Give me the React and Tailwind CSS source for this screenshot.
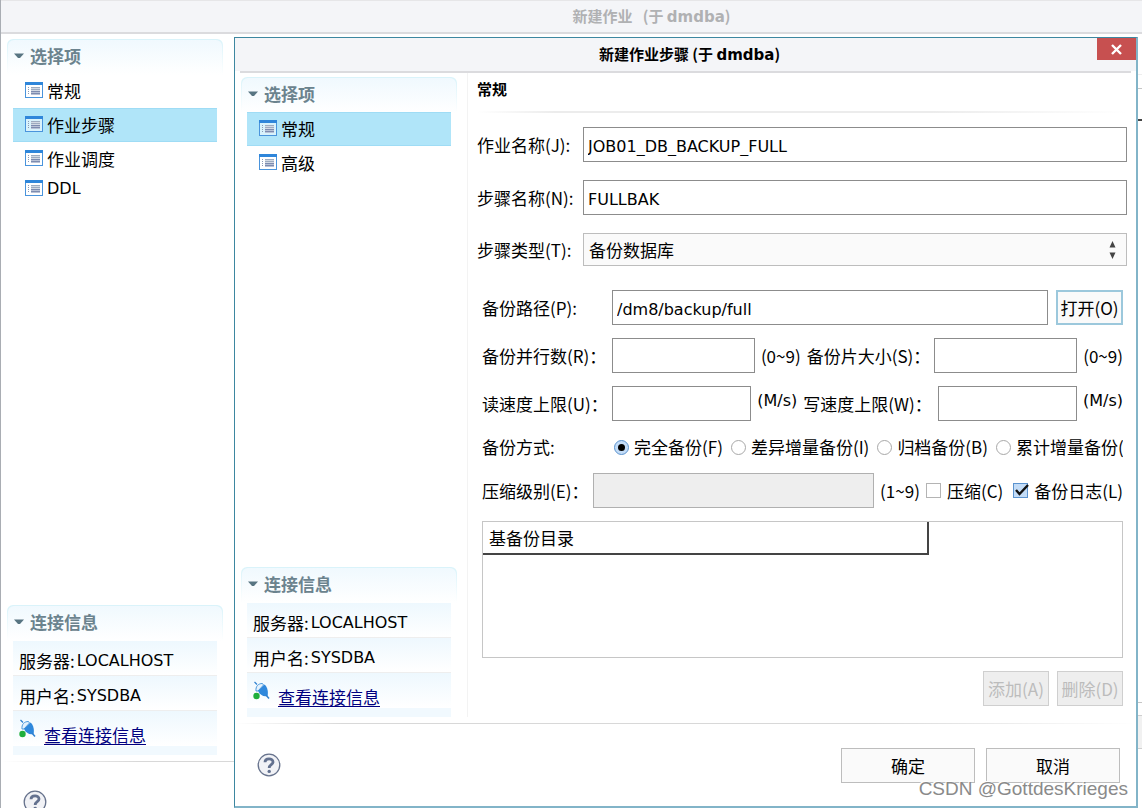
import React, { useId, useState } from "react";
import clsx from "clsx";

const OUTER_ITEMS = ["常规", "作业步骤", "作业调度", "DDL"];
const STEP_ITEMS = ["常规", "高级"];
const MODES = ["完全备份(F)", "差异增量备份(I)", "归档备份(B)", "累计增量备份("];

const LATIN = "font-['DejaVu_Sans','Noto_Sans_CJK_SC',sans-serif] text-[16px]";

function ListIcon() {
  return (
    <svg width="18" height="16" viewBox="0 0 18 16" className="mb-0.5 flex-shrink-0" aria-hidden="true">
      <rect x="0.5" y="0.5" width="17" height="15" fill="#fff" fillOpacity="0.5" stroke="#4a94dc" />
      <rect width="18" height="3" fill="#2f86da" />
      {[5, 7, 9, 11].map((y) => (
        <g key={y}>
          <rect x="3" y={y} width="1" height="1" fill="#8b9ab5" />
          <rect x="6" y={y} width="9" height="2" fill={y > 8 ? "#b9c2d6" : "#d3dae4"} />
          <rect x="6" y={y} width="9" height="1" fill={y > 8 ? "#7d8cb0" : "#9dabc0"} />
        </g>
      ))}
    </svg>
  );
}

function PlugIcon() {
  return (
    <svg width="17" height="19" viewBox="0 0 17 19" className="flex-shrink-0" aria-hidden="true">
      <path d="M1.5 1 L4 3.5" fill="none" stroke="#2f80d0" strokeWidth="1.2" />
      <path d="M3 10 C2.5 5.5 5 2.5 9.5 2.5 L10.5 4 L5 10 Z" fill="#e4f1fc" stroke="#4a98dc" />
      <path d="M5 10 L11.5 3.5 C14.5 6 15.5 11 14.5 15 C10.5 16 7 14 5 10 Z" fill="#2f88dc" />
      <path d="M13 14 L16 17.5" stroke="#2f80d0" strokeWidth="1.5" />
      <circle cx="3.5" cy="15" r="3.2" fill="#1fae3c" />
    </svg>
  );
}

function HelpButton() {
  return (
    <button type="button" aria-label="帮助" className="flex h-6 w-6 flex-shrink-0">
      <svg width="24" height="24" viewBox="0 0 24 24" aria-hidden="true">
        <circle cx="12" cy="12" r="10.8" fill="#f1f2f6" stroke="#66728c" strokeWidth="1.3" />
        <path d="M8 9.2 C8 4.8 16 4.8 16 9 C16 11.8 12.2 11.6 12.2 15" fill="none" stroke="#63718f" strokeWidth="2.8" />
        <circle cx="12.2" cy="18.4" r="1.7" fill="#63718f" />
      </svg>
    </button>
  );
}

function SectionHeader({ children }) {
  return (
    <div className="h-9 rounded-t-md bg-gradient-to-b from-[#d9f3fa] to-white p-px pb-0">
      <h2 className="flex h-full items-center gap-[6px] rounded-t-md bg-gradient-to-b from-[#f0f9fe] to-white pb-1 pl-[6px] font-bold text-[#6b838e]">
        <svg width="10" height="6" viewBox="0 0 10 6" aria-hidden="true">
          <path d="M0 0.5 H10 L6 5 H4 Z" fill="#587582" />
        </svg>
        {children}
      </h2>
    </div>
  );
}

function InfoRow({ label, value }) {
  return (
    <div className="flex h-[35px] items-center gap-[2px] border-b border-[#eeeeee] bg-gradient-to-b from-[#eef8fe] to-white pl-[6px] pt-[6px]">
      <span>{label}</span>
      <span className={LATIN}>{value}</span>
    </div>
  );
}

function Sidebar({ items, initial }) {
  const [active, setActive] = useState(initial);
  return (
    <nav className="flex w-[216px] flex-shrink-0 flex-col justify-between">
      <div>
        <SectionHeader>选择项</SectionHeader>
        <ul className="mx-[6px] -mt-px">
          {items.map((item) => (
            <li key={item}>
              <button
                type="button"
                onClick={() => setActive(item)}
                className={clsx(
                  "flex w-full items-center gap-1 pl-3 text-left",
                  item === "DDL" ? "h-[26px]" : "h-[34px]",
                  item === active && "border-y border-[#9fdcf5] bg-[#b0e5f9]"
                )}
              >
                <ListIcon />
                <span className={item === "DDL" ? LATIN : undefined}>{item}</span>
              </button>
            </li>
          ))}
        </ul>
      </div>
      <div>
        <SectionHeader>连接信息</SectionHeader>
        <div className="mx-[6px]">
          <InfoRow label="服务器:" value="LOCALHOST" />
          <InfoRow label="用户名:" value="SYSDBA" />
          <div className="flex h-[35px] items-center gap-2 bg-gradient-to-b from-[#eef8fe] to-white pl-[6px]">
            <PlugIcon />
            <a href="#connection" className="mt-3 text-[#000080] underline underline-offset-2">
              查看连接信息
            </a>
          </div>
          <div className="h-[9px] bg-[#f1f9fe]" />
        </div>
      </div>
    </nav>
  );
}

function TextInput({ className, ...rest }) {
  return (
    <input
      type="text"
      className={clsx(
        LATIN,
        "h-[35px] min-w-0 flex-1 border border-[#8c8c8c] bg-white px-1 pt-[3px] text-black outline-none disabled:border-[#b0b0b0] disabled:bg-[#eeeeee]",
        className
      )}
      {...rest}
    />
  );
}

function Field({ label, children }) {
  const id = useId();
  return (
    <div className="flex items-center">
      <label htmlFor={id} className="w-[106px] flex-shrink-0">
        {label}
      </label>
      {children(id)}
    </div>
  );
}

function CheckBox({ label, defaultChecked }) {
  return (
    <label className="flex items-center gap-[6px]">
      <span className="relative flex">
        <input
          type="checkbox"
          defaultChecked={defaultChecked}
          className="peer h-[15px] w-[15px] appearance-none border border-[#b4b4b4] bg-white checked:border-[#5b93cf] checked:bg-[#c3dcf7]"
        />
        <svg
          width="16"
          height="15"
          viewBox="0 0 16 15"
          className="pointer-events-none absolute left-0 top-0 hidden peer-checked:block"
          aria-hidden="true"
        >
          <path d="M3 7 L6.5 11 L15 2" fill="none" stroke="#111" strokeWidth="2.4" />
        </svg>
      </span>
      {label}
    </label>
  );
}

function BackupForm() {
  return (
    <div className="ml-[5px] mr-[4px] mt-6 flex flex-1 flex-col gap-[13px]">
      <div className="flex items-center">
        <label htmlFor="path" className="w-[130px]">
          备份路径(P):
        </label>
        <TextInput id="path" defaultValue="/dm8/backup/full" />
        <button
          type="button"
          className="ml-2 h-[35px] w-[67px] border-2 border-[#9cc8dc] bg-[#fafafa] leading-none whitespace-nowrap"
        >
          打开(O)
        </button>
      </div>

      <div className="flex items-center">
        <label htmlFor="parallel" className="w-[130px]">
          备份并行数(R)：
        </label>
        <TextInput id="parallel" />
        <span className="mx-[6px]">(0~9)</span>
        <label htmlFor="piece" className="pr-1">
          备份片大小(S)：
        </label>
        <TextInput id="piece" />
        <span className="ml-[6px]">(0~9)</span>
      </div>

      <div className="flex items-center">
        <label htmlFor="read" className="w-[130px]">
          读速度上限(U)：
        </label>
        <TextInput id="read" />
        <span className={clsx(LATIN, "mx-[6px] self-start pt-0.5")}>(M/s)</span>
        <label htmlFor="write" className="pr-[6px]">
          写速度上限(W)：
        </label>
        <TextInput id="write" />
        <span className={clsx(LATIN, "ml-[6px] self-start pt-0.5")}>(M/s)</span>
      </div>

      <div role="radiogroup" aria-labelledby="mode-label" className="flex h-[26px] items-center whitespace-nowrap">
        <span id="mode-label" className="w-[132px] flex-shrink-0">
          备份方式:
        </span>
        <div className="flex min-w-0 flex-1 gap-2 overflow-hidden">
          {MODES.map((mode, i) => (
            <label key={mode} className="flex flex-shrink-0 items-center gap-[5px]">
              <input
                type="radio"
                name="mode"
                defaultChecked={i === 0}
                className="flex h-[15px] w-[15px] appearance-none items-center justify-center rounded-full border border-[#a8a8a8] bg-white before:h-[7px] before:w-[7px] before:rounded-full checked:border-[#5b93cf] checked:bg-[#c3dcf7] checked:before:bg-black"
              />
              {mode}
            </label>
          ))}
        </div>
      </div>

      <div className="flex items-center">
        <label htmlFor="level" className="pr-1">
          压缩级别(E)：
        </label>
        <TextInput id="level" disabled />
        <span className="mx-[6px]">(1~9)</span>
        <CheckBox label="压缩(C)" />
        <span className="w-[10px]" />
        <CheckBox label="备份日志(L)" defaultChecked />
      </div>

      <div className="min-h-[80px] flex-1 border border-[#c6c6c6]">
        <table className="w-[446px]">
          <thead>
            <tr>
              <th className="h-8 border-b-2 border-r-2 border-[#444] pl-[6px] text-left font-normal">基备份目录</th>
            </tr>
          </thead>
        </table>
      </div>

      <div className="flex justify-end gap-2 text-[#bcbcbc]">
        <button type="button" disabled className="h-[35px] w-[66px] whitespace-nowrap border border-[#cfcfcf] bg-[#eeeeee]">
          添加(A)
        </button>
        <button type="button" disabled className="h-[35px] w-[66px] whitespace-nowrap border border-[#cfcfcf] bg-[#eeeeee]">
          删除(D)
        </button>
      </div>
    </div>
  );
}

function StepDialog() {
  return (
    <section
      role="dialog"
      aria-label="新建作业步骤"
      className="absolute bottom-0 left-[233px] right-1 top-[37px] flex flex-col border-b-2 border-l border-r-2 border-t border-b-[#82b4c8] border-l-[#3d87a0] border-r-[#82b4c8] border-t-[#3d87a0] bg-white"
    >
      <header className="relative flex h-[33px] items-center justify-center bg-[#f4f5f8] pl-2">
        <h1 className="text-[15px] font-bold">
          新建作业步骤 (于 <span className="font-['DejaVu_Sans']">dmdba</span>)
        </h1>
        <button
          type="button"
          aria-label="关闭"
          className="absolute right-0 top-0 flex h-[22px] w-[39px] items-center justify-center bg-[#c75050]"
        >
          <svg width="11" height="11" viewBox="0 0 11 11" aria-hidden="true">
            <path d="M1 1 L10 10 M10 1 L1 10" stroke="#fff" strokeWidth="2.4" />
          </svg>
        </button>
      </header>
      <div className="mx-[5px] h-0.5 bg-[#dbdbde]" />

      <div className="flex min-h-0 flex-1">
        <div className="flex pb-[6px] pl-[6px] pr-[10px] pt-1">
          <Sidebar items={STEP_ITEMS} initial="常规" />
        </div>
        <main className="mb-[6px] flex min-w-0 flex-1 flex-col border-l border-[#f3f3f3] pb-[11px] pl-[9px] pr-[9px]">
          <h2 className="flex h-[38px] items-center pb-[6px] text-[15px] font-bold">常规</h2>
          <div className="h-0.5 bg-[linear-gradient(to_right,#fff,#ececec_12%,#ececec_70%,#fff)]" />
          <div className="mt-[14px] flex flex-col gap-[18px]">
            <Field label="作业名称(J):">{(id) => <TextInput id={id} defaultValue="JOB01_DB_BACKUP_FULL" />}</Field>
            <Field label="步骤名称(N):">{(id) => <TextInput id={id} defaultValue="FULLBAK" />}</Field>
            <Field label="步骤类型(T):">
              {(id) => (
                <div className="relative flex-1">
                  <select id={id} className="block h-[33px] w-full appearance-none border border-[#bdbdbd] bg-[#fafafa] px-[5px]">
                    <option>备份数据库</option>
                  </select>
                  <svg
                    width="7"
                    height="18"
                    viewBox="0 0 7 18"
                    className="pointer-events-none absolute right-[11px] top-2"
                    aria-hidden="true"
                  >
                    <path d="M3.5 0 L6.5 6.5 H0.5 Z M3.5 18 L6.5 11.5 H0.5 Z" fill="#444" />
                  </svg>
                </div>
              )}
            </Field>
          </div>
          <BackupForm />
        </main>
      </div>

      <div className="h-px bg-[linear-gradient(to_right,#fff,#d8d8d8_12%,#d8d8d8_70%,#fff)]" />
      <footer className="flex h-[82px] items-center justify-between pl-[22px] pr-4">
        <HelpButton />
        <div className="flex gap-[11px]">
          <button type="button" className="h-[35px] w-[134px] border border-[#bdbdbd] bg-[#fafafa] pt-0.5">
            确定
          </button>
          <button type="button" className="h-[35px] w-[134px] border border-[#bdbdbd] bg-[#fafafa] pt-0.5">
            取消
          </button>
        </div>
      </footer>
    </section>
  );
}

export default function App() {
  return (
    <div className="relative flex h-screen min-h-[700px] flex-col overflow-hidden border-l border-[#a9adb3] bg-white font-['Noto_Sans_CJK_SC',sans-serif] text-[17px] leading-[26px] text-black">
      <header className="flex h-[34px] flex-shrink-0 items-center justify-center border-b-2 border-t border-b-[#dbdbde] border-t-[#e6e6e8] bg-[#f4f5f8] pl-40">
        <h1 className="whitespace-pre text-[15px] font-bold text-[#b0b1b3]">
          新建作业   (于 <span className="font-['DejaVu_Sans']">dmdba</span>)
        </h1>
      </header>

      <div className="flex min-h-0 flex-1 justify-between pb-[6px] pl-[6px] pt-[5px]">
        <Sidebar items={OUTER_ITEMS} initial="作业步骤" />
        {/* edge of the step list that shows past the dialog */}
        <div className="flex w-2 flex-col pt-[35px]">
          <div className="h-[15px] border-b border-t border-b-[#c6c6c6] border-t-[#eeeeee]" />
          <div className="h-8 border-b-2 border-[#444]" />
          <div className="flex-1 border-b border-[#c6c6c6]" />
          <div className="mb-[6px] mt-3 h-[34px] border-y border-[#cfcfcf] bg-[#f1f1f1]" />
        </div>
      </div>
      <div className="h-px bg-[linear-gradient(to_right,#fff,#d8d8d8_12%,#d8d8d8_70%,#fff)]" />
      <footer className="h-[46px] flex-shrink-0 pl-[22px] pt-[28px]">
        <HelpButton />
      </footer>

      <StepDialog />

      <p className="pointer-events-none absolute bottom-1 right-[14px] font-['Liberation_Sans',sans-serif] text-[19px] leading-[30px] text-[#8a8a8a] [text-shadow:-1px_-1px_0_#ffffff]">
        CSDN @GottdesKrieges
      </p>
    </div>
  );
}
